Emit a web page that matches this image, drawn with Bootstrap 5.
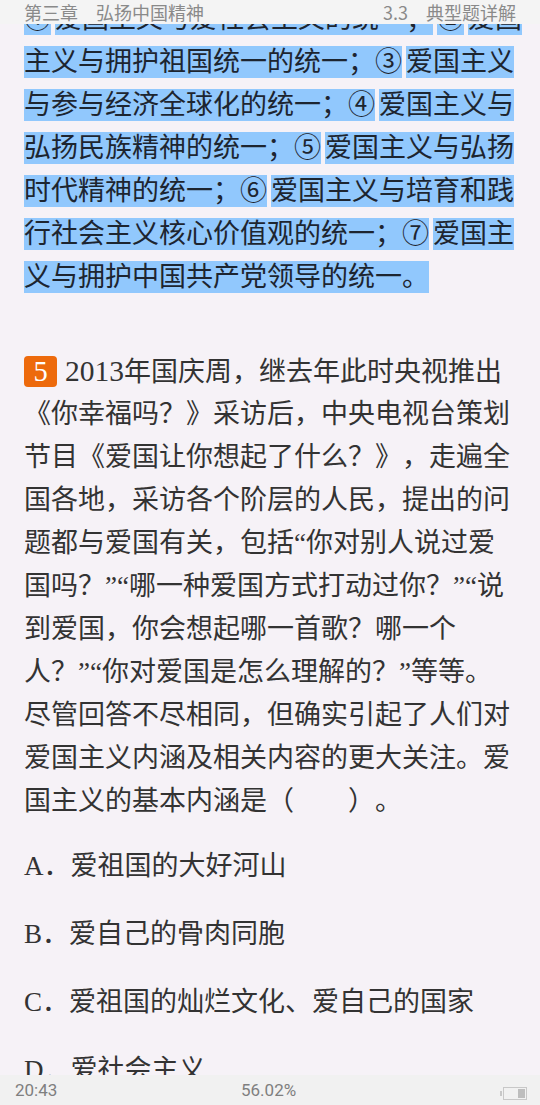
<!DOCTYPE html>
<html lang="zh"><head><meta charset="utf-8">
<link href="https://cdn.jsdelivr.net/npm/bootstrap@5.3.0/dist/css/bootstrap.min.css" rel="stylesheet">
<style>
html,body{height:1105px;overflow:hidden}
body{background:#f6f2f7;font-family:"Liberation Serif","Noto Sans CJK SC",serif;color:#333;text-spacing-trim:space-all}
.reader{width:540px;height:1105px}
.topbar{height:24px;background:#f4f4f4;color:#8a8a8a;font:18px/25px "Noto Sans CJK SC",sans-serif;padding:0 24px;z-index:2}
.pagebody{overflow:hidden;min-height:0}
.flowtext{padding:0 27px 0 24px;font-size:27px;margin-top:-27px}
.ln{height:43px;line-height:43px;white-space:nowrap}
.just{text-align:justify;text-align-last:justify}
.latin{font-size:29.5px}
.optkey{font-size:27px}
.hl{background:#91c8fd;color:#1d2530;display:inline-block;height:32px;line-height:32px;vertical-align:top;margin-top:6px}
.hlrow{display:flex;gap:4px}
.gapq{margin-top:52px}
.numchip{display:inline-block;width:33px;height:31px;background:#ed6a0c;color:#fff;border-radius:4px;text-align:center;line-height:31px;font-size:28.5px;vertical-align:top;margin-top:6px;margin-right:8px}
.opt{margin-top:25px}
.optfirst{margin-top:22px}
.botbar{height:30px;background:#f1f1f1;color:#7f7f7f;font:17px/32px "Roboto",sans-serif;padding:0 13px 0 15px}
.pct{left:241px}
.battwrap{margin-top:6px}
.batt{width:24px;height:13px;border:1px solid #c8c8c8;padding:1px}
.battcap{width:2px;height:5px;background:#c8c8c8;margin-right:1px}
.battlvl{width:7px;background:#bdbdbd}
</style></head><body>
<div class="reader d-flex flex-column">
<div class="topbar d-flex justify-content-between flex-shrink-0"><span>第三章&emsp;弘扬中国精神</span><span>3.3&emsp;典型题详解</span></div>
<div class="pagebody flex-grow-1"><div class="flowtext">
<div class="ln hlrow"><span class="hl">①</span><span class="hl flex-grow-1 just">爱国主义与爱社会主义的统一；</span><span class="hl">②</span><span class="hl">爱国</span></div>
<div class="ln hlrow"><span class="hl flex-grow-1 just">主义与拥护祖国统一的统一；③</span><span class="hl">爱国主义</span></div>
<div class="ln hlrow"><span class="hl flex-grow-1 just">与参与经济全球化的统一；④</span><span class="hl">爱国主义与</span></div>
<div class="ln hlrow"><span class="hl flex-grow-1 just">弘扬民族精神的统一；⑤</span><span class="hl">爱国主义与弘扬</span></div>
<div class="ln hlrow"><span class="hl flex-grow-1 just">时代精神的统一；⑥</span><span class="hl">爱国主义与培育和践</span></div>
<div class="ln hlrow"><span class="hl flex-grow-1 just">行社会主义核心价值观的统一；⑦</span><span class="hl">爱国主</span></div>
<div class="ln"><span class="hl">义与拥护中国共产党领导的统一。</span></div>
<div class="gapq ln"><span class="numchip">5</span><span class="latin">2013</span>年国庆周，继去年此时央视推出</div>
<div class="ln">《你幸福吗？》采访后，中央电视台策划</div>
<div class="ln">节目《爱国让你想起了什么？》，走遍全</div>
<div class="ln">国各地，采访各个阶层的人民，提出的问</div>
<div class="ln">题都与爱国有关，包括“你对别人说过爱</div>
<div class="ln">国吗？”“哪一种爱国方式打动过你？”“说</div>
<div class="ln">到爱国，你会想起哪一首歌？哪一个</div>
<div class="ln">人？”“你对爱国是怎么理解的？”等等。</div>
<div class="ln">尽管回答不尽相同，但确实引起了人们对</div>
<div class="ln">爱国主义内涵及相关内容的更大关注。爱</div>
<div class="ln">国主义的基本内涵是（&emsp;&emsp;）。</div>
<div class="ln optfirst"><span class="optkey">A</span>．爱祖国的大好河山</div>
<div class="ln opt"><span class="optkey">B</span>．爱自己的骨肉同胞</div>
<div class="ln opt"><span class="optkey">C</span>．爱祖国的灿烂文化、爱自己的国家</div>
<div class="ln opt"><span class="optkey">D</span>．爱社会主义</div>
</div></div>
<div class="botbar d-flex justify-content-between align-items-center flex-shrink-0 position-relative"><span>20:43</span><span class="pct position-absolute">56.02%</span><span class="battwrap d-flex align-items-center"><span class="battcap"></span><span class="batt d-flex justify-content-end"><span class="battlvl"></span></span></span></div>
</div>
</body></html>
